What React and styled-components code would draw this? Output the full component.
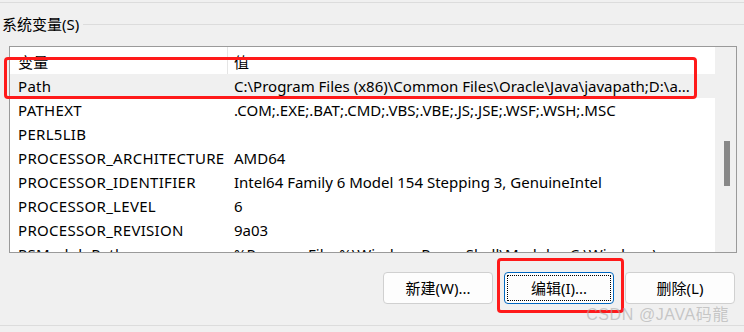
import React from "react";
import styled, { createGlobalStyle } from "styled-components";

const Global = createGlobalStyle`
  html, body { margin: 0; padding: 0; background: #f0f0f0; }
  body { width: 744px; height: 332px; overflow: hidden; }
  #root { width: 744px; height: 332px; }
`;

const Page = styled.div`
  position: relative;
  width: 744px;
  height: 332px;
  background: #f0f0f0;
  font-family: "Noto Sans", "Noto Sans CJK SC", sans-serif;
  font-size: 15px;
  color: #000;
  display: flex;
  flex-direction: column;
  overflow: hidden;
`;

const HLine = styled.div`
  height: 1px;
  background: #dcdcdc;
  margin-top: ${(p) => p.$top}px;
`;

const GroupHeader = styled.div`
  display: flex;
  align-items: center;
  height: 20px;
  margin-top: 11px;
  padding-left: 2px;
  gap: 4px;
`;

const GroupLabel = styled.span`
  line-height: 20px;
  white-space: nowrap;
`;

const GroupLine = styled.div`
  flex: 1;
  height: 1px;
  background: #dcdcdc;
`;

const ListBox = styled.div`
  box-sizing: border-box;
  margin: 12px 0 0 9px;
  width: 728px;
  height: 207px;
  border: 1px solid #9a9a9a;
  background: #fff;
  display: flex;
  overflow: hidden;
`;

const ListContent = styled.div`
  flex: 1;
  overflow: hidden;
`;

const Row = styled.div`
  display: grid;
  grid-template-columns: 217px 1fr;
  height: ${(p) => (p.$header ? 27 : 24)}px;
  align-items: center;
  background: ${(p) => (p.$selected ? "#f0f0f0" : "#fff")};
  white-space: nowrap;
`;

const Cell = styled.div`
  height: 100%;
  display: flex;
  align-items: center;
  padding-left: ${(p) => (p.$value ? 6 : 7)}px;
  border-left: ${(p) => (p.$value && p.$header ? "1px solid #e5e5e5" : "1px solid transparent")};
  overflow: hidden;
  padding-top: ${(p) => (p.$header ? 2 : 0)}px;
  box-sizing: border-box;
  letter-spacing: ${(p) => (p.$value ? 0 : 0.3)}px;
`;

const Scrollbar = styled.div`
  width: 21px;
  background: #f0f0f0;
  display: flex;
  justify-content: center;
`;

const Thumb = styled.div`
  width: 6px;
  height: 45px;
  margin-top: 94px;
  margin-left: 2px;
  background: #888;
`;

const ButtonRow = styled.div`
  display: flex;
  justify-content: flex-end;
  gap: 11px;
  padding-right: 9px;
  margin-top: 19px;
`;

const Button = styled.div`
  box-sizing: border-box;
  width: 110px;
  height: 32px;
  border: 1px solid ${(p) => (p.$focused ? "#0067c0" : "#d0d0d0")};
  border-radius: 4px;
  background: #fdfdfd;
  display: flex;
  align-items: center;
  justify-content: center;
  position: relative;
  padding-bottom: 1px;
`;

const FocusRing = styled.div`
  position: absolute;
  inset: 2px;
  border: 1px dotted #000;
  border-radius: 1px;
`;

const Annotation = styled.div`
  position: absolute;
  box-sizing: border-box;
  border: 3px solid #ff1a1a;
  border-radius: 4px;
  left: ${(p) => p.$x}px;
  top: ${(p) => p.$y}px;
  width: ${(p) => p.$w}px;
  height: ${(p) => p.$h}px;
`;

const Watermark = styled.div`
  position: absolute;
  right: 15px;
  top: 305px;
  font-family: "Liberation Sans", "Noto Sans CJK SC", sans-serif;
  font-size: 16px;
  letter-spacing: 0.6px;
  line-height: 20px;
  color: rgba(170, 170, 170, 0.6);
  white-space: nowrap;
`;

const rows = [
  ["Path", "C:\\Program Files (x86)\\Common Files\\Oracle\\Java\\javapath;D:\\a..."],
  ["PATHEXT", ".COM;.EXE;.BAT;.CMD;.VBS;.VBE;.JS;.JSE;.WSF;.WSH;.MSC"],
  ["PERL5LIB", ""],
  ["PROCESSOR_ARCHITECTURE", "AMD64"],
  ["PROCESSOR_IDENTIFIER", "Intel64 Family 6 Model 154 Stepping 3, GenuineIntel"],
  ["PROCESSOR_LEVEL", "6"],
  ["PROCESSOR_REVISION", "9a03"],
  ["PSModulePath", "%ProgramFiles%\\WindowsPowerShell\\Modules;C:\\Windows\\..."],
];

export default function App() {
  return (
    <Page>
      <Global />
      <HLine $top={2} />
      <GroupHeader>
        <GroupLabel>系统变量(S)</GroupLabel>
        <GroupLine />
      </GroupHeader>
      <ListBox>
        <ListContent>
          <Row $header>
            <Cell $header>变量</Cell>
            <Cell $header $value>值</Cell>
          </Row>
          {rows.map(([k, v], i) => (
            <Row key={k} $selected={i === 0}>
              <Cell>{k}</Cell>
              <Cell $value>{v}</Cell>
            </Row>
          ))}
        </ListContent>
        <Scrollbar>
          <Thumb />
        </Scrollbar>
      </ListBox>
      <ButtonRow>
        <Button>新建(W)...</Button>
        <Button $focused>
          <FocusRing />
          编辑(I)...
        </Button>
        <Button>删除(L)</Button>
      </ButtonRow>
      <HLine $top={21} />
      <Annotation $x={4} $y={57} $w={693} $h={42} />
      <Annotation $x={497} $y={258} $w={127} $h={55} />
      <Watermark>CSDN @JAVA码龍</Watermark>
    </Page>
  );
}
